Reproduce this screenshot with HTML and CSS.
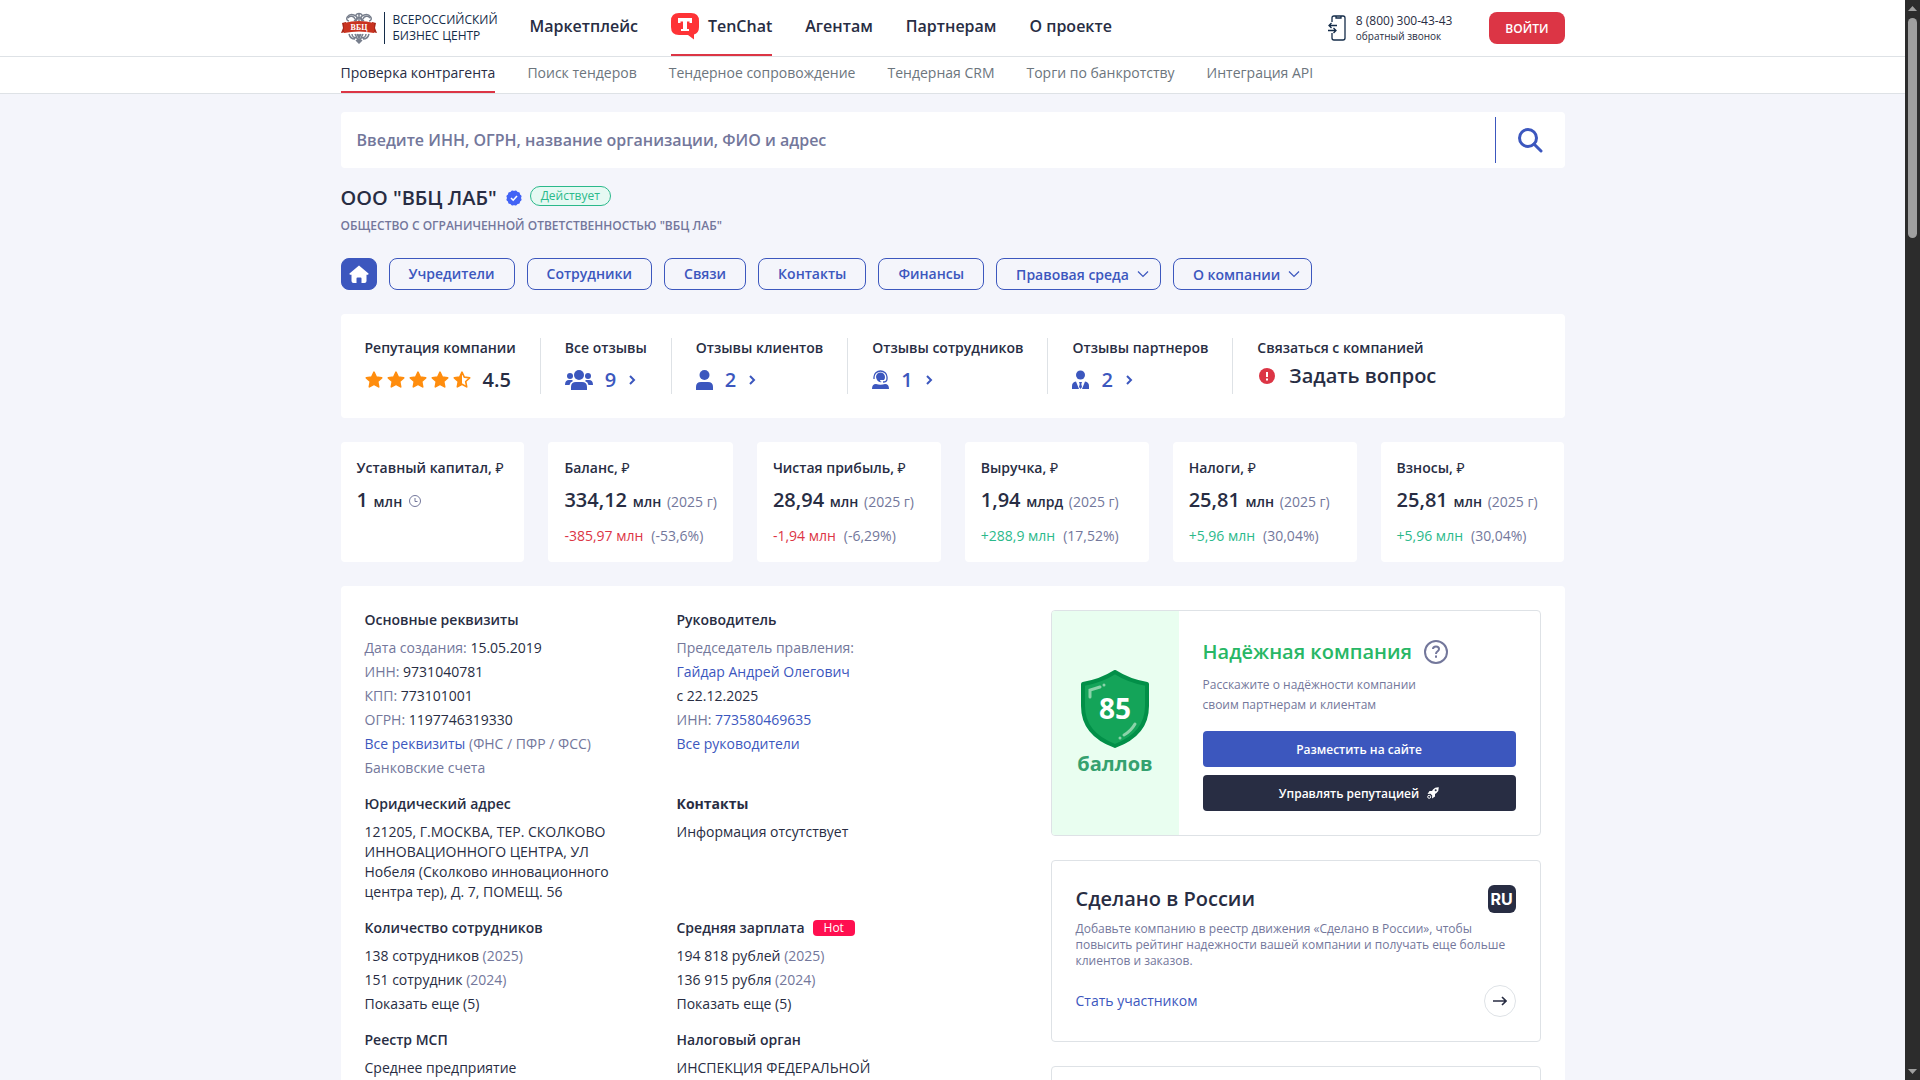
FILE: index.html
```html
<!DOCTYPE html>
<html lang="ru">

<head>
    <meta charset="UTF-8">
    <meta name="viewport" content="width=device-width, initial-scale=1.0">
    <title>ООО "ВБЦ ЛАБ"</title>
    <link rel="stylesheet" href="styles.css">
</head>

<body>
    <!-- shared icons -->
    <svg class="sprite" aria-hidden="true">
        <symbol id="star" viewBox="0 0 18 18">
            <path d="M9 1.2l2.3 4.9 5.4.7-4 3.7 1 5.4L9 13.3l-4.7 2.6 1-5.4-4-3.7 5.4-.7z" fill="#ff8d0e" stroke="#ff8d0e" stroke-width="1.6" stroke-linejoin="round"/>
        </symbol>
        <symbol id="star-half" viewBox="0 0 18 18">
            <path d="M9 1.2l2.3 4.9 5.4.7-4 3.7 1 5.4L9 13.3l-4.7 2.6 1-5.4-4-3.7 5.4-.7z" fill="none" stroke="#ff8d0e" stroke-width="1.6" stroke-linejoin="round"/>
            <path d="M9 1.2v12.1l-4.7 2.6 1-5.4-4-3.7 5.4-.7z" fill="#ff8d0e"/>
        </symbol>
        <symbol id="next" viewBox="0 0 8 12">
            <path d="M2 2l4 4-4 4" fill="none" stroke="#3c57be" stroke-width="2"/>
        </symbol>
        <symbol id="down" viewBox="0 0 12 12">
            <path d="M1 3.5l5 5 5-5" fill="none" stroke="#3c57be" stroke-width="1.2"/>
        </symbol>
    </svg>

    <div class="page">
        <header class="header">
            <div class="container header-row">
                <a href="#" class="logo">
                    <svg width="36" height="32" viewBox="0 0 36 32">
                        <g fill="none" stroke="#777e8c" stroke-width="1.5">
                            <path d="M8 9C3 8 7 1 13 3c4 1 4 5 1 6M28 9c5-1 1-8-5-6-4 1-4 5-1 6"/>
                            <path d="M7 6c2-3 6-2 7 1M29 6c-2-3-6-2-7 1M15 3c1-2 5-2 6 0M18 2v9M13 9l5-4 5 4"/>
                            <path d="M8 22c1 4 3 5 6 5M28 22c-1 4-3 5-6 5M11 22c0 3 3 4 5 4M25 22c0 3-3 4-5 4M14 22l4 8 4-8M18 22v8M15 28l3 3 3-3M16 22l2 4 2-4"/>
                        </g>
                        <path d="M1 11l4-1v10l-5 1 2-5zM35 11l-4-1v10l5 1-2-5z" fill="#a92719"/>
                        <path d="M3 11q15-4 30 0v10q-15-3-30 0z" fill="#c93320"/>
                        <text x="18" y="18" class="logo-letters">ВБЦ</text>
                    </svg>
                    <span class="logo-text">ВСЕРОССИЙСКИЙ<br>БИЗНЕС ЦЕНТР</span>
                </a>
                <nav class="main-nav">
                    <a href="#">Маркетплейс</a>
                    <a href="#" class="active">
                        <svg width="28" height="28" viewBox="0 0 28 28">
                            <path d="M8 1h12q8 0 8 8v6q0 6-5 7.500v5L17 23H8q-8 0-8-8V9q0-8 8-8z" fill="#fe3336"/>
                            <path d="M7 6h14v5h-2.500V9.500h-2.500v7.500h2v2h-8v-2h2V9.500H9.500V11H7z" fill="#fff"/>
                        </svg>
                        TenChat
                    </a>
                    <a href="#">Агентам</a>
                    <a href="#">Партнерам</a>
                    <a href="#">О проекте</a>
                </nav>
                <div class="phone">
                    <svg width="18" height="26" viewBox="0 0 18 26" fill="none" stroke="#142c49" stroke-width="1.300">
                        <path d="M4 7V3q0-2 2-2h9q2 0 2 2v20q0 2-2 2H6q-2 0-2-2v-5M8 1v2h5V1"/>
                        <path d="M9 10.500H1M3.500 8L1 10.500 3.500 13M0 15.500h8M5.500 13L8 15.500 5.500 18"/>
                    </svg>
                    <div class="phone-text">
                        <a href="tel:88003004343" class="phone-number">8 (800) 300-43-43</a>
                        <a href="#" class="phone-call">обратный звонок</a>
                    </div>
                </div>
                <button type="button" class="btn-login">ВОЙТИ</button>
            </div>
        </header>
        <div class="subheader">
            <nav class="container sub-nav">
                <a href="#" class="active">Проверка контрагента</a>
                <a href="#">Поиск тендеров</a>
                <a href="#">Тендерное сопровождение</a>
                <a href="#">Тендерная CRM</a>
                <a href="#">Торги по банкротству</a>
                <a href="#">Интеграция API</a>
            </nav>
        </div>

        <main class="container">
            <form class="search">
                <input type="text" name="query" aria-label="Поиск" placeholder="Введите ИНН, ОГРН, название организации, ФИО и адрес">
                <button type="submit" aria-label="Найти">
                    <svg width="26" height="26" viewBox="0 0 26 26" fill="none" stroke="#3c57be" stroke-width="3">
                        <circle cx="11" cy="11" r="8.500"/>
                        <path d="M17 17l7 7" stroke-linecap="round"/>
                    </svg>
                </button>
            </form>

            <div class="company">
                <h1>ООО "ВБЦ ЛАБ"</h1>
                <svg width="16" height="16" viewBox="0 0 16 16">
                    <g fill="#4263f5">
                        <rect x="2" y="2" width="12" height="12" rx="2"/>
                        <rect x="2" y="2" width="12" height="12" rx="2" transform="rotate(30 8 8)"/>
                        <rect x="2" y="2" width="12" height="12" rx="2" transform="rotate(60 8 8)"/>
                    </g>
                    <path d="M5 8l2.200 2.200L11 6" fill="none" stroke="#fff" stroke-width="1.600"/>
                </svg>
                <span class="status">Действует</span>
            </div>
            <p class="company-full">ОБЩЕСТВО С ОГРАНИЧЕННОЙ ОТВЕТСТВЕННОСТЬЮ "ВБЦ ЛАБ"</p>

            <nav class="tabs">
                <a href="#" class="tab tab-home" aria-label="Главная">
                    <svg width="20" height="18" viewBox="0 0 20 18">
                        <path d="M10 0.500L19.500 8.500q.5 1-.7 1.200H17.500V16q0 2-2 2H12.500V13.500q0-1-1-1h-3q-1 0-1 1V18H4.500q-2 0-2-2V9.700H1.200Q0 9.500.5 8.500z" fill="#fff"/>
                    </svg>
                </a>
                <a href="#" class="tab">Учредители</a>
                <a href="#" class="tab">Сотрудники</a>
                <a href="#" class="tab">Связи</a>
                <a href="#" class="tab">Контакты</a>
                <a href="#" class="tab">Финансы</a>
                <button type="button" class="tab tab-menu">Правовая среда <svg width="12" height="12"><use href="#down"/></svg></button>
                <button type="button" class="tab tab-menu">О компании <svg width="12" height="12"><use href="#down"/></svg></button>
            </nav>

            <section class="card reputation">
                <div class="rep-item">
                    <div class="rep-label">Репутация компании</div>
                    <div class="rep-value rating">
                        <span class="stars">
                            <svg width="18" height="18"><use href="#star"/></svg>
                            <svg width="18" height="18"><use href="#star"/></svg>
                            <svg width="18" height="18"><use href="#star"/></svg>
                            <svg width="18" height="18"><use href="#star"/></svg>
                            <svg width="18" height="18"><use href="#star-half"/></svg>
                        </span>
                        4.5
                    </div>
                </div>
                <div class="rep-item">
                    <div class="rep-label">Все отзывы</div>
                    <a href="#" class="rep-value">
                        <svg width="28" height="20" viewBox="0 0 28 20" fill="#3c57be">
                            <circle cx="14" cy="5" r="5"/>
                            <circle cx="5" cy="6" r="3"/>
                            <circle cx="23" cy="6" r="3"/>
                            <path d="M6 20v-3q0-5 5-5h6q5 0 5 5v3zM0 15q0-5 4-5h3l1 1q-3 1-3.500 4zM28 15q0-5-4-5h-3l-1 1q3 1 3.500 4z"/>
                        </svg>
                        <span>9</span>
                        <svg width="8" height="12"><use href="#next"/></svg>
                    </a>
                </div>
                <div class="rep-item">
                    <div class="rep-label">Отзывы клиентов</div>
                    <a href="#" class="rep-value">
                        <svg width="17" height="20" viewBox="0 0 17 20" fill="#3c57be">
                            <circle cx="8.500" cy="5" r="5"/>
                            <path d="M0 20v-3q0-5 5-5h7q5 0 5 5v3z"/>
                        </svg>
                        <span>2</span>
                        <svg width="8" height="12"><use href="#next"/></svg>
                    </a>
                </div>
                <div class="rep-item">
                    <div class="rep-label">Отзывы сотрудников</div>
                    <a href="#" class="rep-value">
                        <svg width="17" height="20" viewBox="0 0 17 20" fill="#3c57be">
                            <path d="M2 9V7a6.500 6 0 0 1 13 0v2q0 3-4 3" fill="none" stroke="#3c57be" stroke-width="1.300"/>
                            <path d="M4 7a4.500 4.500 0 0 1 9 0q0 2-1 3H8q0 2 2 2-5 1-6-5z"/>
                            <path d="M0 19q0-5 4-5 4.500 1.500 9 0 4 0 4 5z"/>
                        </svg>
                        <span>1</span>
                        <svg width="8" height="12"><use href="#next"/></svg>
                    </a>
                </div>
                <div class="rep-item">
                    <div class="rep-label">Отзывы партнеров</div>
                    <a href="#" class="rep-value">
                        <svg width="17" height="20" viewBox="0 0 17 20" fill="#3c57be">
                            <circle cx="8.500" cy="5" r="4.500"/>
                            <path d="M0 19v-3q0-4 4-4.500l3 7.500zM17 19v-3q0-4-4-4.500L10 19zM7 12h3l-.7 2L10 17l-1.500 2L7 17l.7-3z"/>
                        </svg>
                        <span>2</span>
                        <svg width="8" height="12"><use href="#next"/></svg>
                    </a>
                </div>
                <div class="rep-item rep-contact">
                    <div class="rep-label">Связаться с компанией</div>
                    <a href="#" class="rep-value ask">
                        <svg width="20" height="16" viewBox="0 0 20 16">
                            <circle cx="10" cy="8" r="8" fill="#dc3545"/>
                            <path d="M10 4v5M10 10.500v2" stroke="#fff" stroke-width="2"/>
                        </svg>
                        Задать вопрос
                    </a>
                </div>
            </section>

            <section class="metrics">
                <div class="card metric">
                    <div class="metric-label">Уставный капитал, <i>₽</i></div>
                    <div class="metric-value"><b>1</b> млн
                        <svg width="12" height="12" viewBox="0 0 12 12" fill="none" stroke="#73779b">
                            <circle cx="6" cy="6" r="5.500"/>
                            <path d="M6 3v3.500h2.500"/>
                        </svg>
                    </div>
                </div>
                <div class="card metric">
                    <div class="metric-label">Баланс, <i>₽</i></div>
                    <div class="metric-value"><b>334,12</b> млн <span>(2025 г)</span></div>
                    <div class="metric-delta"><span class="minus">-385,97 млн</span> <span>(-53,6%)</span></div>
                </div>
                <div class="card metric">
                    <div class="metric-label">Чистая прибыль, <i>₽</i></div>
                    <div class="metric-value"><b>28,94</b> млн <span>(2025 г)</span></div>
                    <div class="metric-delta"><span class="minus">-1,94 млн</span> <span>(-6,29%)</span></div>
                </div>
                <div class="card metric">
                    <div class="metric-label">Выручка, <i>₽</i></div>
                    <div class="metric-value"><b>1,94</b> млрд <span>(2025 г)</span></div>
                    <div class="metric-delta"><span class="plus">+288,9 млн</span> <span>(17,52%)</span></div>
                </div>
                <div class="card metric">
                    <div class="metric-label">Налоги, <i>₽</i></div>
                    <div class="metric-value"><b>25,81</b> млн <span>(2025 г)</span></div>
                    <div class="metric-delta"><span class="plus">+5,96 млн</span> <span>(30,04%)</span></div>
                </div>
                <div class="card metric">
                    <div class="metric-label">Взносы, <i>₽</i></div>
                    <div class="metric-value"><b>25,81</b> млн <span>(2025 г)</span></div>
                    <div class="metric-delta"><span class="plus">+5,96 млн</span> <span>(30,04%)</span></div>
                </div>
            </section>

            <section class="card details">
                <div class="info">
                    <div class="info-block">
                        <h2>Основные реквизиты</h2>
                        <ul>
                            <li><span>Дата создания:</span> 15.05.2019</li>
                            <li><span>ИНН:</span> 9731040781</li>
                            <li><span>КПП:</span> 773101001</li>
                            <li><span>ОГРН:</span> 1197746319330</li>
                            <li><a href="#">Все реквизиты</a> <span>(ФНС / ПФР / ФСС)</span></li>
                            <li><span>Банковские счета</span></li>
                        </ul>
                    </div>
                    <div class="info-block">
                        <h2>Руководитель</h2>
                        <ul>
                            <li><span>Председатель правления:</span></li>
                            <li><a href="#">Гайдар Андрей Олегович</a></li>
                            <li>с 22.12.2025</li>
                            <li><span>ИНН:</span> <a href="#">773580469635</a></li>
                            <li><a href="#">Все руководители</a></li>
                        </ul>
                    </div>
                    <div class="info-block">
                        <h2>Юридический адрес</h2>
                        <p>121205, Г.МОСКВА, ТЕР. СКОЛКОВО ИННОВАЦИОННОГО ЦЕНТРА, УЛ Нобеля (Сколково инновационного центра тер), Д. 7, ПОМЕЩ. 56</p>
                    </div>
                    <div class="info-block">
                        <h2 class="strong">Контакты</h2>
                        <p>Информация отсутствует</p>
                    </div>
                    <div class="info-block">
                        <h2>Количество сотрудников</h2>
                        <ul>
                            <li>138 сотрудников <span>(2025)</span></li>
                            <li>151 сотрудник <span>(2024)</span></li>
                            <li>Показать еще (5)</li>
                        </ul>
                    </div>
                    <div class="info-block">
                        <h2>Средняя зарплата <em class="hot">Hot</em></h2>
                        <ul>
                            <li>194 818 рублей <span>(2025)</span></li>
                            <li>136 915 рубля <span>(2024)</span></li>
                            <li>Показать еще (5)</li>
                        </ul>
                    </div>
                    <div class="info-block">
                        <h2>Реестр МСП</h2>
                        <p>Среднее предприятие</p>
                    </div>
                    <div class="info-block">
                        <h2>Налоговый орган</h2>
                        <p>ИНСПЕКЦИЯ ФЕДЕРАЛЬНОЙ</p>
                    </div>
                </div>

                <aside class="side">
                    <div class="panel trust">
                        <div class="trust-score">
                            <svg width="68" height="78" viewBox="0 0 68 78">
                                <path d="M34 2Q48 11 66 14v22q0 28-32 40Q2 64 2 36V14Q20 11 34 2z" fill="#14a459" stroke="#028f48" stroke-width="4" stroke-linejoin="round"/>
                                <path d="M9 27v-7l10-3M54 54q-4 7-11 11" fill="none" stroke="#8ad3a9" stroke-width="3" stroke-linecap="round"/>
                                <circle cx="23" cy="15" r="1.500" fill="#8ad3a9"/>
                                <circle cx="39" cy="68" r="1.500" fill="#8ad3a9"/>
                                <text x="34" y="49" class="shield-score">85</text>
                            </svg>
                            <span>баллов</span>
                        </div>
                        <div class="trust-body">
                            <h3>Надёжная компания
                                <svg width="24" height="24" viewBox="0 0 24 24" fill="none" stroke="#73779b" stroke-width="2">
                                    <circle cx="12" cy="12" r="11"/>
                                    <path d="M9 9q0-2.500 3-2.500t3 2.500q0 1.500-1.500 2.300T12 14"/>
                                    <path d="M12 15.500v2.300"/>
                                </svg>
                            </h3>
                            <p>Расскажите о надёжности компании<br>своим партнерам и клиентам</p>
                            <button type="button" class="btn btn-blue">Разместить на сайте</button>
                            <button type="button" class="btn btn-dark">Управлять репутацией
                                <svg width="12" height="12" viewBox="0 0 12 12">
                                    <path d="M11.800.2Q8 0 6 2.500L5 4H2.500L.5 7l3-.2 1.700 1.700L5 11.500l3-2V7l1.500-1Q12 4 11.800.2z" fill="#fff"/>
                                    <circle cx="8.700" cy="3.300" r="1" fill="#282d43"/>
                                    <circle cx="2.200" cy="9.800" r="1.500" fill="none" stroke="#fff"/>
                                </svg>
                            </button>
                        </div>
                    </div>
                    <div class="panel made">
                        <div class="made-head">
                            <h3>Сделано в России</h3>
                            <span class="ru">RU</span>
                        </div>
                        <p>Добавьте компанию в реестр движения «Сделано в России», чтобы повысить рейтинг надежности вашей компании и получать еще больше клиентов и заказов.</p>
                        <div class="made-foot">
                            <a href="#">Стать участником</a>
                            <a href="#" class="arrow" aria-label="Подробнее">
                                <svg width="14" height="10" viewBox="0 0 14 10" fill="none" stroke="#282d43" stroke-width="1.600">
                                    <path d="M0 5h13M9 1l4 4-4 4"/>
                                </svg>
                            </a>
                        </div>
                    </div>
                    <div class="panel made"></div>
                </aside>
            </section>
        </main>
    </div>

    <div class="scrollbar">
        <svg width="9" height="5" viewBox="0 0 9 5"><path d="M4.500 0L9 5H0z" fill="#9f9f9f"/></svg>
        <div class="thumb"></div>
        <svg class="scroll-down" width="9" height="5" viewBox="0 0 9 5"><path d="M0 0h9L4.500 5z" fill="#9f9f9f"/></svg>
    </div>
</body>

</html>
```

FILE: styles.css
```css
* {
    box-sizing: border-box;
}

body {
    margin: 0;
    font-family: 'Open Sans', 'Noto Sans', sans-serif;
    font-size: 14px;
    line-height: 20px;
    color: #282d43;
    background-color: #f4f5fb;
}

h1,
h2,
h3,
p,
ul {
    margin: 0;
    padding: 0;
    font-weight: 400;
}

ul {
    list-style: none;
}

a {
    color: #3c57be;
    text-decoration: none;
}

button,
input {
    font-family: inherit;
    border: none;
}

svg {
    flex: none;
}

.sprite {
    display: none;
}

.page {
    height: 100vh;
    padding-right: 15px;
    overflow: hidden;
}

.container {
    width: 100%;
    max-width: 1224px;
    margin: 0 auto;
}

/* header */
.header {
    background-color: #fff;
    border-bottom: 1px solid #dee2e6;
}

.header-row {
    display: flex;
    align-items: center;
    height: 56px;
}

.logo {
    display: flex;
    align-items: center;
    gap: 7px;
    color: #142c49;
}

.logo-text {
    padding-left: 8px;
    border-left: 1px solid #142c49;
    font-size: 12px;
    line-height: 16px;
}

.logo-letters {
    font-family: 'Liberation Serif', serif;
    font-size: 8px;
    font-weight: 700;
    fill: #fff;
    text-anchor: middle;
}

.main-nav {
    display: flex;
    gap: 33px;
    height: 100%;
    margin-left: 32px;
    font-size: 16px;
    font-weight: 600;
}

.main-nav a {
    display: flex;
    align-items: center;
    gap: 9px;
    padding-bottom: 2px;
    border-bottom: 2px solid transparent;
    color: #282d43;
}

.main-nav .active,
.sub-nav .active {
    border-color: #dc3545;
    color: #282d43;
}

.phone {
    display: flex;
    align-items: center;
    gap: 10px;
    margin-left: auto;
}

.phone-text {
    display: flex;
    flex-direction: column;
}

.phone-text a {
    color: #282d43;
}

.phone-number {
    font-size: 12px;
    line-height: 16px;
    font-weight: 500;
}

.phone-call {
    font-size: 10px;
    line-height: 14px;
}

.btn-login {
    height: 32px;
    margin-left: 37px;
    padding: 0 16px;
    border-radius: 8px;
    background-color: #dc3545;
    color: #fff;
    font-size: 12px;
    font-weight: 600;
}

.subheader {
    background-color: #fff;
    border-bottom: 1px solid #dee2e6;
}

.sub-nav {
    display: flex;
    gap: 32px;
    height: 36px;
}

.sub-nav a {
    padding-top: 6px;
    border-bottom: 2px solid transparent;
    color: #6c757d;
}

/* search */
.search {
    display: flex;
    align-items: center;
    height: 56px;
    margin-top: 18px;
    border-radius: 4px;
    background-color: #fff;
}

.search input {
    flex: 1;
    height: 46px;
    padding: 0 16px;
    border-right: 1px solid #3c57be;
    background: none;
    font-size: 16px;
    font-weight: 600;
}

.search input::placeholder {
    color: #73779b;
    opacity: 1;
}

.search button {
    display: flex;
    align-items: center;
    justify-content: center;
    width: 69px;
    height: 56px;
    background: none;
}

/* company */
.company {
    display: flex;
    align-items: center;
    margin-top: 16px;
    height: 28px;
}

.company h1 {
    margin-right: 9px;
    font-size: 20px;
    line-height: 28px;
    font-weight: 600;
}

.status {
    align-self: flex-start;
    height: 20px;
    margin: 2px 0 0 8px;
    padding: 0 10px;
    border: 1px solid #2bb98b;
    border-radius: 10px;
    background-color: #e6f9f3;
    color: #2bb98b;
    font-size: 12px;
    line-height: 18px;
}

.company-full {
    margin-top: 4px;
    color: #73779b;
    font-size: 12px;
    font-weight: 600;
}

.tabs {
    display: flex;
    gap: 12px;
    margin: 22px 0 24px;
}

.tab {
    display: flex;
    align-items: center;
    height: 32px;
    padding: 0 19px;
    border: 1px solid #3c57be;
    border-radius: 8px;
    background: none;
    color: #3c57be;
    font-size: 14px;
    font-weight: 600;
}

.tab-home {
    padding: 0 7px;
    background-color: #3c57be;
}

.tab-menu {
    gap: 8px;
    padding-right: 11px;
}

.card {
    border-radius: 4px;
    background-color: #fff;
}

/* reputation */
.reputation {
    display: flex;
    padding: 24px 0;
}

.rep-item {
    display: flex;
    flex-direction: column;
    gap: 8px;
    padding: 0 24px;
    border-right: 1px solid #dee2e6;
    font-weight: 600;
}

.rep-value {
    display: flex;
    align-items: center;
    gap: 12px;
    font-size: 20px;
    line-height: 28px;
}

.stars {
    display: flex;
    gap: 4px;
}

.rep-contact {
    gap: 4px;
    border: none;
}

.ask {
    color: #282d43;
}

/* metrics */
.metrics {
    display: grid;
    grid-template-columns: repeat(6, 1fr);
    gap: 24px;
    margin: 24px 0;
}

.metric {
    padding: 16px;
    white-space: nowrap;
}

.metric-label,
.metric-value {
    font-weight: 600;
}

.metric-label i {
    font-style: normal;
    font-weight: 400;
}

.metric-value {
    margin: 8px 0 12px;
}

.metric-value b {
    margin-right: 2px;
    font-size: 20px;
    line-height: 28px;
    font-weight: 600;
}

.metric-value span,
.metric-delta span {
    color: #73779b;
    font-weight: 400;
}

.metric-value span {
    margin-left: 2px;
}

.metric-value svg {
    margin-left: 3px;
}

.metric-delta {
    display: flex;
    gap: 8px;
}

.metric-delta .minus {
    color: #dc3545;
}

.metric-delta .plus {
    color: #2bb98b;
}

/* details */
.details {
    display: flex;
    justify-content: space-between;
    gap: 24px;
    padding: 24px;
}

.info {
    display: grid;
    grid-template-columns: repeat(2, 312px);
    gap: 16px 0;
    align-content: start;
}

.info-block {
    padding-right: 48px;
}

.info h2 {
    display: flex;
    align-items: center;
    gap: 8px;
    margin-bottom: 8px;
    font-size: 14px;
    line-height: 20px;
    font-weight: 600;
}

.info .strong {
    font-weight: 700;
}

.info ul {
    display: grid;
    gap: 4px;
}

.info span {
    color: #73779b;
}

.hot {
    padding: 0 11px;
    border-radius: 4px;
    background-color: #ff0f50;
    color: #fff;
    font-size: 12px;
    line-height: 16px;
    font-style: normal;
    font-weight: 400;
}

.side {
    display: flex;
    flex-direction: column;
    gap: 24px;
    width: 490px;
}

.panel {
    border: 1px solid #dee2e6;
    border-radius: 4px;
    overflow: hidden;
}

.panel h3 {
    font-size: 20px;
    line-height: 28px;
    font-weight: 600;
}

.panel p {
    color: #73779b;
    font-size: 12px;
    line-height: 16px;
}

.trust {
    display: flex;
}

.trust-score {
    display: flex;
    flex-direction: column;
    align-items: center;
    justify-content: center;
    gap: 2px;
    width: 127px;
    padding-top: 2px;
    background-color: #e9fef0;
    color: #35a16f;
    font-size: 20px;
    line-height: 28px;
    font-weight: 700;
}

.shield-score {
    font-size: 28px;
    font-weight: 700;
    fill: #fff;
    text-anchor: middle;
}

.trust-body {
    flex: 1;
    padding: 24px;
}

.trust-body h3 {
    display: flex;
    align-items: center;
    gap: 12px;
    height: 34px;
    margin-bottom: 6px;
    color: #28b765;
}

.trust-body p {
    margin-bottom: 16px;
    line-height: 20px;
}

.btn {
    display: flex;
    align-items: center;
    justify-content: center;
    gap: 8px;
    width: 100%;
    height: 36px;
    border-radius: 4px;
    color: #fff;
    font-size: 12px;
    font-weight: 600;
}

.btn-blue {
    margin-bottom: 8px;
    background-color: #3c57be;
}

.btn-dark {
    background-color: #282d43;
}

.made {
    padding: 24px;
}

.made-head,
.made-foot {
    display: flex;
    align-items: center;
    justify-content: space-between;
}

.made p {
    margin: 8px 0 16px;
}

.ru {
    width: 28px;
    height: 28px;
    border-radius: 6px;
    background-color: #282d43;
    color: #fff;
    font-family: Inter, sans-serif;
    font-size: 16px;
    line-height: 28px;
    font-weight: 700;
    text-align: center;
}

.arrow {
    display: flex;
    align-items: center;
    justify-content: center;
    width: 32px;
    height: 32px;
    border: 1px solid #dee2e6;
    border-radius: 50%;
}

/* scrollbar */
.scrollbar {
    position: fixed;
    top: 0;
    right: 0;
    bottom: 0;
    display: flex;
    flex-direction: column;
    align-items: center;
    gap: 7px;
    width: 15px;
    padding: 6px 0;
    background-color: #2c2c2c;
}

.thumb {
    width: 9px;
    height: 220px;
    border-radius: 5px;
    background-color: #9f9f9f;
}

.scroll-down {
    margin-top: auto;
}
```
